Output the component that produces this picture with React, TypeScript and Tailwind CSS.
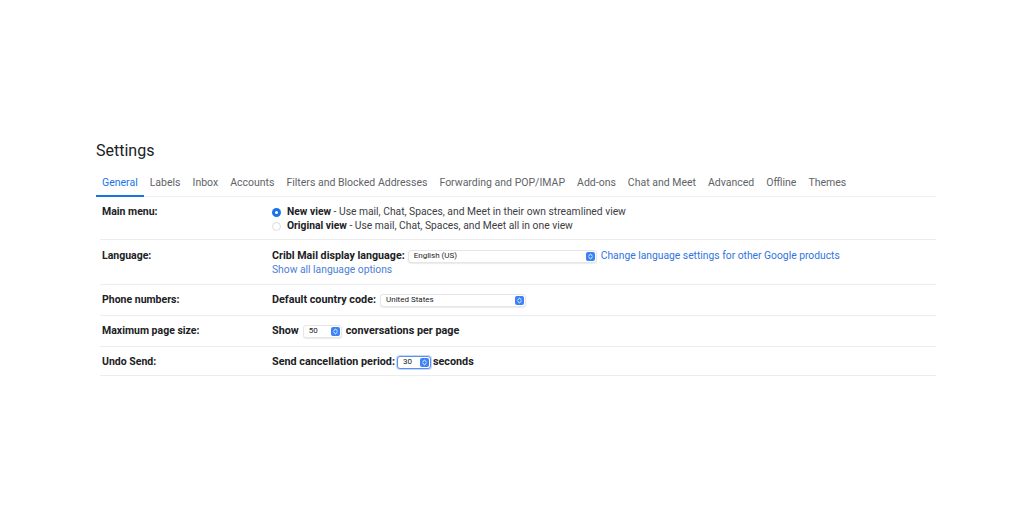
import React from 'react';

const tabs = [
  'General',
  'Labels',
  'Inbox',
  'Accounts',
  'Filters and Blocked Addresses',
  'Forwarding and POP/IMAP',
  'Add-ons',
  'Chat and Meet',
  'Advanced',
  'Offline',
  'Themes',
];

// macOS style up/down stepper shown at the end of a select
const Stepper = () => (
  <svg width="9" height="9" viewBox="0 0 9 9" className="shrink-0">
    <rect x="0" y="0" width="9" height="9" rx="2" fill="#3b82f6" />
    <path d="M2.8 3.7 L4.5 2.2 L6.2 3.7" fill="none" stroke="#fff" strokeWidth="1" strokeLinecap="round" strokeLinejoin="round" />
    <path d="M2.8 5.3 L4.5 6.8 L6.2 5.3" fill="none" stroke="#fff" strokeWidth="1" strokeLinecap="round" strokeLinejoin="round" />
  </svg>
);

interface SelectProps {
  value: string;
  width: string;
  focused?: boolean;
}

function FakeSelect({ value, width, focused }: SelectProps) {
  return (
    <span
      className={`flex items-center justify-between h-[13px] pl-[5px] pr-[1px] rounded-[3px] bg-white text-[8px] leading-none text-[#222] ${width} ${
        focused
          ? 'border border-[#5b8ff0] shadow-[0_0_0_1px_rgba(91,143,240,0.35)]'
          : 'border border-[#e6e6e6] shadow-[0_1px_1px_rgba(0,0,0,0.08)]'
      }`}
    >
      <span>{value}</span>
      <Stepper />
    </span>
  );
}

function Row({ label, pad, children }: { label: string; pad: string; children: React.ReactNode }) {
  return (
    <div className={`flex border-b border-[#ececec] ml-[4px] ${pad}`}>
      <div className="w-[172px] pl-[2px] font-bold text-[10.5px] text-[#202124] h-[14px] leading-[14px]">{label}</div>
      <div className="flex-1 leading-[14px] text-[#202124]">{children}</div>
    </div>
  );
}

const Line = ({ children }: { children: React.ReactNode }) => (
  <div className="flex items-center h-[14px] whitespace-nowrap">{children}</div>
);

export default function App() {
  return (
    <div className="w-[1024px] h-[519px] bg-white text-[10.3px]" style={{ fontFamily: 'Roboto, "Open Sans", Arial, sans-serif' }}>
      <div className="pl-[96px] pt-[139px] w-[936px]">
        <h1 className="text-[16px] leading-[24px] text-[#202124]">Settings</h1>

        <div className="flex mt-[13px] border-b border-[#eeeeee] text-[10.5px]">
          {tabs.map((t, i) => (
            <div
              key={t}
              className={`px-[6px] leading-[14px] pb-[5px] -mb-px border-b-2 ${
                i === 0 ? 'text-[#1a73e8] border-[#1a73e8]' : 'text-[#5f6368] border-transparent'
              }`}
            >
              {t}
            </div>
          ))}
        </div>

        <Row label="Main menu:" pad="pt-[8px] pb-[6px]">
          <Line>
            <span className="w-[9px] h-[9px] mr-[6px] rounded-full bg-[#1a73e8] flex items-center justify-center">
              <span className="w-[3px] h-[3px] rounded-full bg-white" />
            </span>
            <span className="font-bold">New view</span>
            <span className="text-[#3c4043] whitespace-pre"> - Use mail, Chat, Spaces, and Meet in their own streamlined view</span>
          </Line>
          <Line>
            <span className="w-[9px] h-[9px] mr-[6px] rounded-full border border-[#dadce0]" />
            <span className="font-bold">Original view</span>
            <span className="text-[#3c4043] whitespace-pre"> - Use mail, Chat, Spaces, and Meet all in one view</span>
          </Line>
        </Row>

        <Row label="Language:" pad="pt-[9px] pb-[7px]">
          <Line>
            <span className="font-bold text-[10.7px]">Cribl Mail display language:</span>
            <span className="ml-[3px]">
              <FakeSelect value="English (US)" width="w-[189px]" />
            </span>
            <span className="ml-[4px] text-[#2f74e0]">Change language settings for other Google products</span>
          </Line>
          <Line>
            <span className="text-[#4a7fd6]">Show all language options</span>
          </Line>
        </Row>

        <Row label="Phone numbers:" pad="pt-[8px] pb-[8px]">
          <Line>
            <span className="font-bold text-[10.8px]">Default country code:</span>
            <span className="ml-[4px]">
              <FakeSelect value="United States" width="w-[146px]" />
            </span>
          </Line>
        </Row>

        <Row label="Maximum page size:" pad="pt-[8px] pb-[8px]">
          <Line>
            <span className="font-bold text-[10.8px]">Show</span>
            <span className="ml-[4px]">
              <FakeSelect value="50" width="w-[39px]" />
            </span>
            <span className="ml-[4px] font-bold text-[10.8px]">conversations per page</span>
          </Line>
        </Row>

        <Row label="Undo Send:" pad="pt-[8px] pb-[6px]">
          <Line>
            <span className="font-bold text-[10.8px]">Send cancellation period:</span>
            <span className="ml-[2px]">
              <FakeSelect value="30" width="w-[34px]" focused />
            </span>
            <span className="ml-[2px] font-bold text-[10.8px]">seconds</span>
          </Line>
        </Row>
      </div>
    </div>
  );
}
